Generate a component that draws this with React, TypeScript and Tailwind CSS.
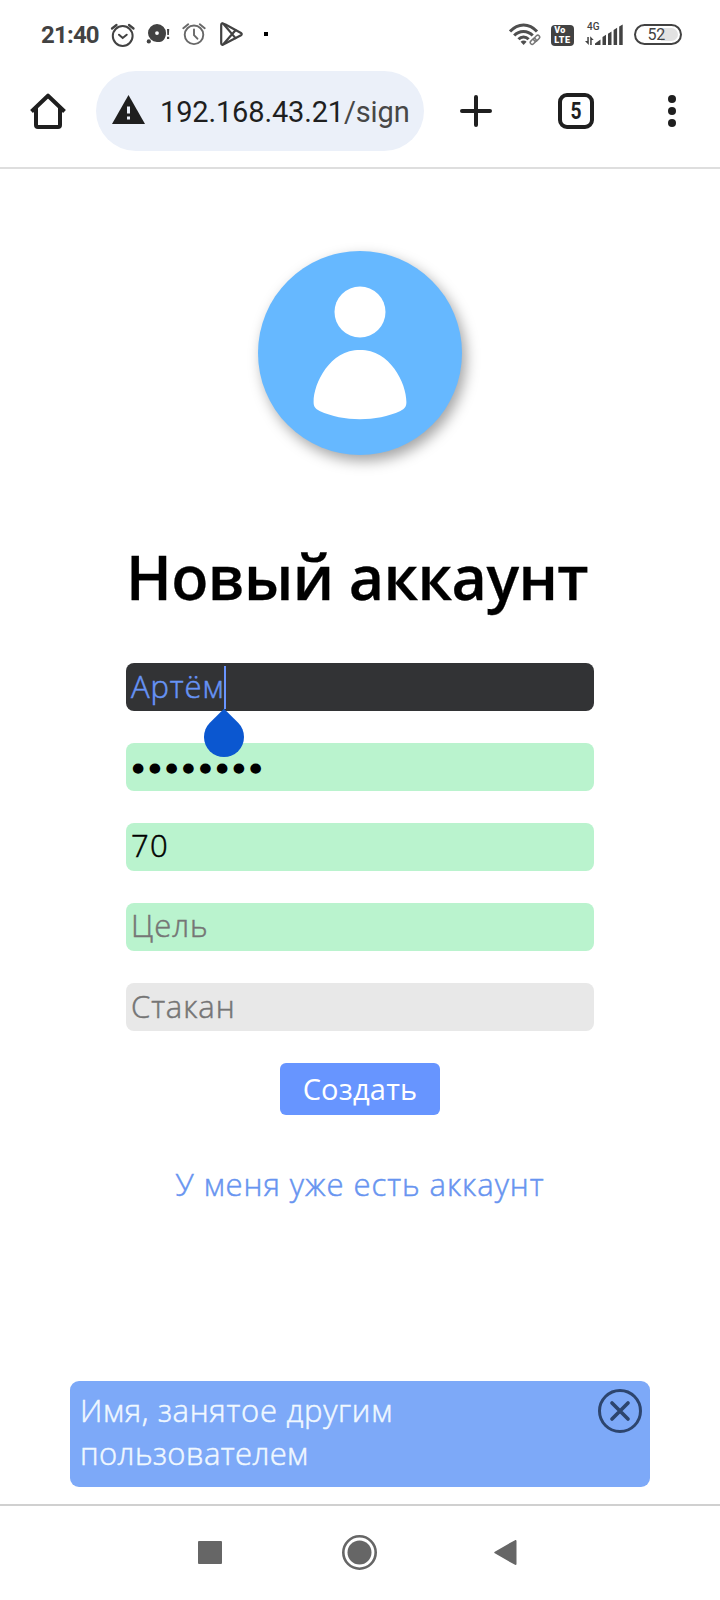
import type { ReactNode } from "react";

function StatusBar() {
  return (
    <div className="flex h-[70px] items-start pl-[41px] text-[#424242]">
      <span className="mt-[21px] w-[69px] font-['Roboto',sans-serif] text-[24px] leading-[28px] font-bold tracking-[-0.8px]">21:40</span>
      <svg className="mt-[22px] h-[26px] w-[26px]" viewBox="0 0 26 26" fill="none" stroke="currentColor" strokeWidth="2" strokeLinecap="round">
        <circle cx="12.7" cy="14" r="9.9" />
        <path d="M2 6.5 6.500 3M23.500 6.500 19 3" strokeWidth="2.3" />
        <path d="m9 12.7 3.7 3.3 4-3.3" />
      </svg>
      <svg className="mt-[22px] ml-[10px] h-[26px] w-[26px]" viewBox="0 0 26 26" fill="currentColor">
        <path fillRule="evenodd" d="M11 2a9 9 0 1 0 0 18h2.500c4 0 6.500-4.500 6.500-9A9 9 0 0 0 11 2Zm0 7.200a1.900 1.900 0 1 1 0 3.800 1.900 1.900 0 0 1 0-3.800Z" />
        <circle cx="2.8" cy="19.4" r="2.1" />
        <path d="M21 7h2.200l-.3 6h-1.600zM21 14.700h2.200v2.200H21z" />
      </svg>
      <svg className="mt-[22px] ml-[10px] h-[26px] w-[26px]" viewBox="0 0 26 26" fill="none" stroke="#686868" strokeWidth="1.9" strokeLinecap="round">
        <circle cx="12" cy="12.8" r="9.3" />
        <path d="M1.300 6.200 6.200 2.300M22.700 6.200 17.800 2.300M12 7.500v5.700l3.400 3.500" />
      </svg>
      <svg className="mt-[21px] ml-[11px] h-[26px] w-[26px]" viewBox="0 0 26 26" fill="none" stroke="currentColor" strokeWidth="2.200" strokeLinejoin="round" strokeLinecap="round">
        <path d="M3.200 2.200c-.7.3-1 .8-1 1.600v18.500c0 .9.400 1.500 1.100 1.600l3.400-1.600L22 14.200c1-.6 1-1.600 0-2.200L6.500 3.500Z" />
        <path d="m4.500 3 12 14.100M4.500 23l12-13.700" />
      </svg>
      <span className="mt-[32px] ml-[19px] h-1 w-1 bg-black" />
      <svg className="mt-[22px] ml-[241px] h-[26px] w-[33px]" viewBox="0 0 33 26" fill="none" stroke="#4f4f4f" strokeWidth="3">
        <path d="M1 9.500C9 .8 20.200.8 28 9.500" />
        <path d="M5.200 13.500c5-5.500 13.500-5.500 18.500 0M9.500 17.300c2.800-3 7.300-3 10.100 0" />
        <path d="m11.600 19.800c1.700-1.600 4.300-1.600 6 0l-3 3.300z" fill="#4f4f4f" stroke="none" />
        <g stroke="#777" strokeWidth="1.500">
          <rect x="25.800" y="12.800" width="3.800" height="6.800" rx="1.900" transform="rotate(45 27.700 16.200)" />
          <rect x="22.300" y="16" width="3.800" height="6.800" rx="1.900" transform="rotate(45 24.200 19.400)" />
        </g>
      </svg>
      <div className="mt-[25px] ml-[9px] flex h-[21px] w-[23px] flex-col items-center rounded-[4px] bg-[#424242] font-['Roboto',sans-serif] text-[9px] font-black text-white">
        <span className="-ml-[5px] leading-[11px] tracking-[0.4px]">Vo</span>
        <span className="leading-[9px] tracking-[0.6px]">LTE</span>
      </div>
      <div className="mt-[22px] ml-[11px] h-[24px] w-[38px]">
        <div className="pl-[2px] font-['Roboto',sans-serif] text-[10px] leading-[9px] font-medium">4G</div>
        <svg className="-mt-[7px] h-[22px] w-[38px]" viewBox="0 0 38 22" fill="currentColor">
          <path d="M10 21v-1.500l5.500-4V21zM17.500 21v-8l3.500-2.200V21zM23 21V9.700l3.500-2.300V21zM28.600 21V6l3.500-2.300V21zM34.200 21V2.500L37.700.5V21z" />
          <path d="M2.300 13h1.500v8L0 17h2.300zM5.200 21v-8.800L8.700 16H6.700v5z" />
        </svg>
      </div>
      <div className="mt-[24px] ml-[11px] flex h-[21px] w-[48px] items-center rounded-full border-2 border-[#424242] bg-[linear-gradient(90deg,#fff_55%,#e2e2e2_55%)] bg-clip-content p-[2px] pl-[11.500px] font-['Roboto',sans-serif] text-[16px] leading-[16px] tracking-[-0.2px]">
        52
      </div>
    </div>
  );
}

function BrowserBar() {
  return (
    <div className="flex h-[99px] items-start border-b-2 border-[#dedede] pl-[30px] text-[#1f1f1f]">
      <svg className="mt-[23px] h-9 w-9" viewBox="0 0 36 36" fill="none" stroke="currentColor" strokeWidth="4">
        <path d="M1.500 18.500 18 2.700l16.500 15.800" strokeLinejoin="round" />
        <path d="M6 15v17q0 2 2 2h20q2 0 2-2V15" />
      </svg>
      <div className="mt-px ml-[30px] flex h-20 w-[328px] items-center rounded-full bg-[#ebf0f9] pl-4">
        <svg className="-mt-[3px] h-[30px] w-[34px]" viewBox="0 0 34 30">
          <path d="M16.500 0 33 29H0z" fill="currentColor" />
          <path d="M15 11.500h3v7h-3zM15 21.500h3v3h-3z" fill="#ebf0f9" />
        </svg>
        <span className="mt-[2px] ml-[14px] font-['Roboto',sans-serif] text-[29px] leading-9 font-normal tracking-[-0.15px] whitespace-nowrap">
          192.168.43.21<span className="text-[#474747]">/sign</span>
        </span>
      </div>
      <svg className="mt-[25px] ml-9 h-8 w-8" viewBox="0 0 32 32" stroke="currentColor" strokeWidth="4" strokeLinecap="round">
        <path d="M2 16h28M16 2v28" />
      </svg>
      <div className="mt-[23px] ml-[66px] flex h-9 w-9 items-center justify-center rounded-[9px] border-4 border-current font-['Roboto',sans-serif] text-[24px] leading-none font-bold">
        <span className="scale-x-[0.8]">5</span>
      </div>
      <div className="mt-[25px] ml-[74px] flex flex-col gap-1">
        <span className="h-2 w-2 rounded-full bg-current" />
        <span className="h-2 w-2 rounded-full bg-current" />
        <span className="h-2 w-2 rounded-full bg-current" />
      </div>
    </div>
  );
}

function Avatar() {
  return (
    <div className="mt-[82px] h-[204px] w-[204px] rounded-full bg-[#66b8ff] shadow-[4px_6px_14px_rgba(0,0,0,0.36)]">
      <svg className="h-full w-full" viewBox="0 0 204 204" fill="#fff">
        <circle cx="102" cy="61" r="25.500" />
        <path d="M102 98.700C72 98.700 55.600 132 55.600 151c0 4.500 1.500 6.500 6 9 24 11 56.800 11 80.800 0 4.500-2.500 6-4.500 6-9 0-19-16.400-52.300-46.400-52.300Z" />
      </svg>
    </div>
  );
}

function Field({ className, children }: { className: string; children: ReactNode }) {
  return <div className={"relative flex h-12 items-center rounded-[8px] pb-[3px] pl-[5px] leading-[44px] whitespace-nowrap " + className}>{children}</div>;
}

function Form() {
  return (
    <div className="mt-[39px] flex w-[468px] flex-col gap-8">
      <Field className="bg-[#323335] text-[#6794f6]">
        <span className="w-[93px] tracking-[0.9px]">Артём</span>
        <span className="mt-[3px] h-[43px] w-[2px] bg-[#6995ff]" />
        <span className="absolute top-[54px] left-[78px] z-10 h-10 w-10 rotate-45 rounded-full rounded-tl-none bg-[#0b57d0]" />
      </Field>
      <Field className="bg-[#baf3ce] text-black">
        <span className="mt-[7px] -ml-[2px] font-['DejaVu_Sans',sans-serif] text-[31px] font-normal tracking-[-1.500px] [-webkit-text-stroke:1.6px]">••••••••</span>
      </Field>
      <Field className="bg-[#baf3ce] pb-[4px] tracking-[1.200px] text-black">70</Field>
      <Field className="bg-[#baf3ce] pb-[4px] tracking-[0.9px] text-[#757575]">Цель</Field>
      <Field className="bg-[#e8e8e8] tracking-[0.9px] text-[#757575]">Стакан</Field>
    </div>
  );
}

function Toast() {
  return (
    <div className="mt-auto mb-[17px] flex h-[106px] w-[580px] items-start justify-between rounded-[9px] bg-[#7da9f8] pt-[8px] pr-[8px] pl-[10px]">
      <p className="leading-[43px] tracking-[0.4px] text-[#f0f8ff]">
        <span className="tracking-[0.7px]">Имя, занятое другим</span>
        <br />
        пользователем
      </p>
      <svg className="h-11 w-11" viewBox="0 0 44 44" fill="none" stroke="#2d456e" strokeWidth="3" strokeLinecap="round">
        <circle cx="22" cy="22" r="20.500" />
        <path d="m14 14 16 16M30 14 14 30" strokeWidth="3.700" />
      </svg>
    </div>
  );
}

function NavBar() {
  return (
    <div className="flex h-[96px] items-center border-t-2 border-[#d0d0d0] pl-[198px] text-[#666]">
      <span className="-mt-px h-[23px] w-[24px] rounded-[1px] bg-current" />
      <svg className="ml-[119px] h-9 w-9" viewBox="0 0 36 36">
        <circle cx="18.500" cy="17.500" r="16.200" fill="none" stroke="currentColor" strokeWidth="2.600" />
        <circle cx="18.500" cy="17.500" r="12" fill="currentColor" />
      </svg>
      <svg className="ml-[117px] h-[26px] w-[23px]" viewBox="0 0 23 26" fill="currentColor" stroke="currentColor" strokeLinejoin="round" strokeWidth="2">
        <path d="M1.300 12.500 21.500 1v23z" />
      </svg>
    </div>
  );
}

export default function App() {
  return (
    <div className="flex h-[1600px] w-[720px] flex-col overflow-hidden bg-white">
      <StatusBar />
      <BrowserBar />
      <main className="flex flex-1 flex-col items-center font-['Open_Sans','Noto_Sans',sans-serif] text-[31px] font-light [-webkit-text-stroke:0.5px]">
        <Avatar />
        <h1 className="mt-[78px] mr-[6px] mb-[3px] h-[88px] text-[61px] leading-[88px] font-semibold tracking-[-0.6px] whitespace-nowrap text-black [-webkit-text-stroke:0.3px]">Новый аккаунт</h1>
        <Form />
        <div className="mt-8 flex h-[52px] w-40 items-center justify-center rounded-[6px] bg-[#6795ff] pb-[1px] text-[29px] font-normal tracking-[0.2px] text-white [-webkit-text-stroke:0]">Создать</div>
        <div className="mt-[47px] leading-[44px] tracking-[0.95px] whitespace-nowrap text-[#6794f0]">У меня уже есть аккаунт</div>
        <Toast />
      </main>
      <NavBar />
    </div>
  );
}
